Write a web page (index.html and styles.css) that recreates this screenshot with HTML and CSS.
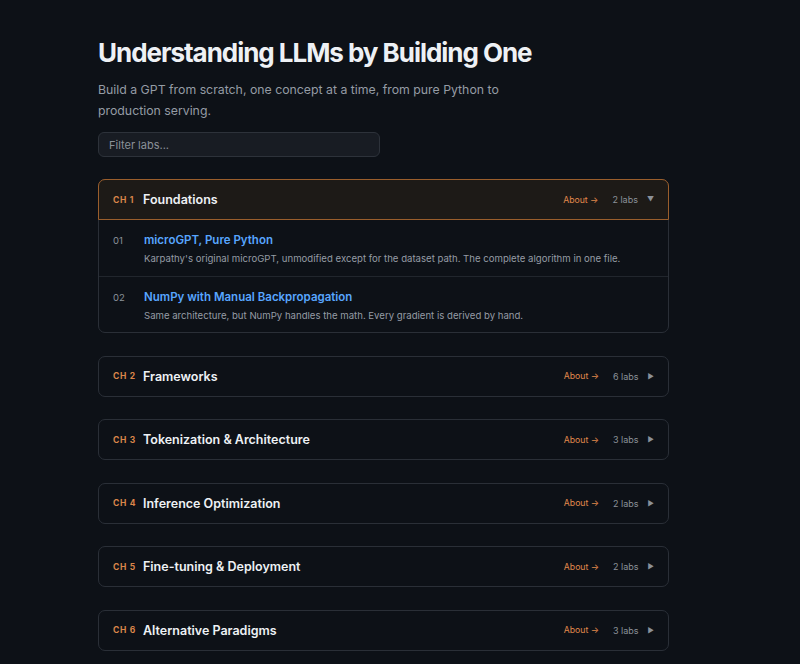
FILE: index.html
```html
<!DOCTYPE html>
<html lang="en">
<head>
  <meta charset="UTF-8" />
  <title>Understanding LLMs by Building One</title>
  <meta name="viewport" content="width=device-width, initial-scale=1" />
  <link rel="stylesheet" href="styles.css">
</head>
<body>
  <main class="page">
    <h1>Understanding LLMs by Building One</h1>
    <p class="lead">Build a GPT from scratch, one concept at a time, from pure Python to production serving.</p>
    <input class="filter" type="text" placeholder="Filter labs..." />

    <section class="chapter open">
      <div class="chapter-head">
        <span class="ch-num">CH 1</span>
        <span class="ch-title">Foundations</span>
        <a class="about" href="#">About &rarr;</a>
        <span class="count">2 labs</span>
        <span class="caret">&#9660;</span>
      </div>
      <div class="lab">
        <span class="lab-num">01</span>
        <div class="lab-body">
          <a class="lab-title" href="#">microGPT, Pure Python</a>
          <p class="lab-desc">Karpathy's original microGPT, unmodified except for the dataset path. The complete algorithm in one file.</p>
        </div>
      </div>
      <div class="lab">
        <span class="lab-num">02</span>
        <div class="lab-body">
          <a class="lab-title" href="#">NumPy with Manual Backpropagation</a>
          <p class="lab-desc">Same architecture, but NumPy handles the math. Every gradient is derived by hand.</p>
        </div>
      </div>
    </section>

    <section class="chapter">
      <div class="chapter-head">
        <span class="ch-num">CH 2</span>
        <span class="ch-title">Frameworks</span>
        <a class="about" href="#">About &rarr;</a>
        <span class="count">6 labs</span>
        <span class="caret">&#9654;</span>
      </div>
    </section>

    <section class="chapter">
      <div class="chapter-head">
        <span class="ch-num">CH 3</span>
        <span class="ch-title">Tokenization &amp; Architecture</span>
        <a class="about" href="#">About &rarr;</a>
        <span class="count">3 labs</span>
        <span class="caret">&#9654;</span>
      </div>
    </section>

    <section class="chapter">
      <div class="chapter-head">
        <span class="ch-num">CH 4</span>
        <span class="ch-title">Inference Optimization</span>
        <a class="about" href="#">About &rarr;</a>
        <span class="count">2 labs</span>
        <span class="caret">&#9654;</span>
      </div>
    </section>

    <section class="chapter">
      <div class="chapter-head">
        <span class="ch-num">CH 5</span>
        <span class="ch-title">Fine-tuning &amp; Deployment</span>
        <a class="about" href="#">About &rarr;</a>
        <span class="count">2 labs</span>
        <span class="caret">&#9654;</span>
      </div>
    </section>

    <section class="chapter">
      <div class="chapter-head">
        <span class="ch-num">CH 6</span>
        <span class="ch-title">Alternative Paradigms</span>
        <a class="about" href="#">About &rarr;</a>
        <span class="count">3 labs</span>
        <span class="caret">&#9654;</span>
      </div>
    </section>
  </main>
</body>
</html>
```

FILE: styles.css
```css
body {
  margin: 0;
  background: #0d1117;
  color: #e6edf3;
  font-family: Inter, "Noto Sans", sans-serif;
}
.page {
  width: 571px;
  padding: 36px 0 40px 98px;
}
h1 {
  margin: 0;
  font-size: 26px;
  line-height: 34px;
  font-weight: 700;
  letter-spacing: -0.04em;
  color: #eef1f5;
}
.lead {
  margin: 9px 0 0;
  max-width: 420px;
  font-size: 12.3px;
  line-height: 21px;
  color: #959ca5;
}
.filter {
  display: block;
  margin: 11px 0 22px;
  width: 282px;
  height: 25px;
  box-sizing: border-box;
  padding: 0 10px;
  background: #181c23;
  border: 1px solid #2d323a;
  border-radius: 6px;
  color: #e6edf3;
  font-family: inherit;
  font-size: 11px;
  outline: none;
}
.filter::placeholder {
  color: #8b9199;
}
.chapter {
  border: 1px solid #2a2f37;
  border-radius: 7px;
  margin-bottom: 22.5px;
}
.chapter-head {
  display: flex;
  align-items: center;
  height: 39px;
  padding: 0 14px;
}
.chapter.open .chapter-head {
  background: #1d1a17;
  border: 1px solid #9a5e2c;
  border-radius: 7px 7px 0 0;
  margin: -1px -1px 0;
}
.ch-num {
  width: 30px;
  font-size: 8.5px;
  font-weight: 700;
  letter-spacing: 0.08em;
  color: #d9854a;
}
.ch-title {
  flex: 1;
  font-size: 12.5px;
  font-weight: 600;
  color: #eef1f5;
}
.about {
  font-size: 8.7px;
  color: #e0894c;
  text-decoration: none;
  margin-right: 14px;
}
.count {
  font-size: 9px;
  color: #8b9199;
  margin-right: 9px;
}
.caret {
  font-size: 7px;
  color: #8b9199;
}
.lab {
  display: flex;
  align-items: flex-start;
  padding: 13px 14px 0;
  height: 56px;
  box-sizing: border-box;
  border-top: 1px solid #21262d;
}
.chapter.open .chapter-head + .lab {
  border-top: none;
}
.lab-num {
  width: 31px;
  font-size: 9.5px;
  line-height: 15px;
  color: #8b9199;
}
.lab-title {
  display: block;
  font-size: 11.5px;
  line-height: 15px;
  font-weight: 600;
  color: #58a6ff;
  text-decoration: none;
}
.lab-desc {
  margin: 4px 0 0;
  font-size: 9.6px;
  line-height: 13px;
  color: #959ca5;
}
```
